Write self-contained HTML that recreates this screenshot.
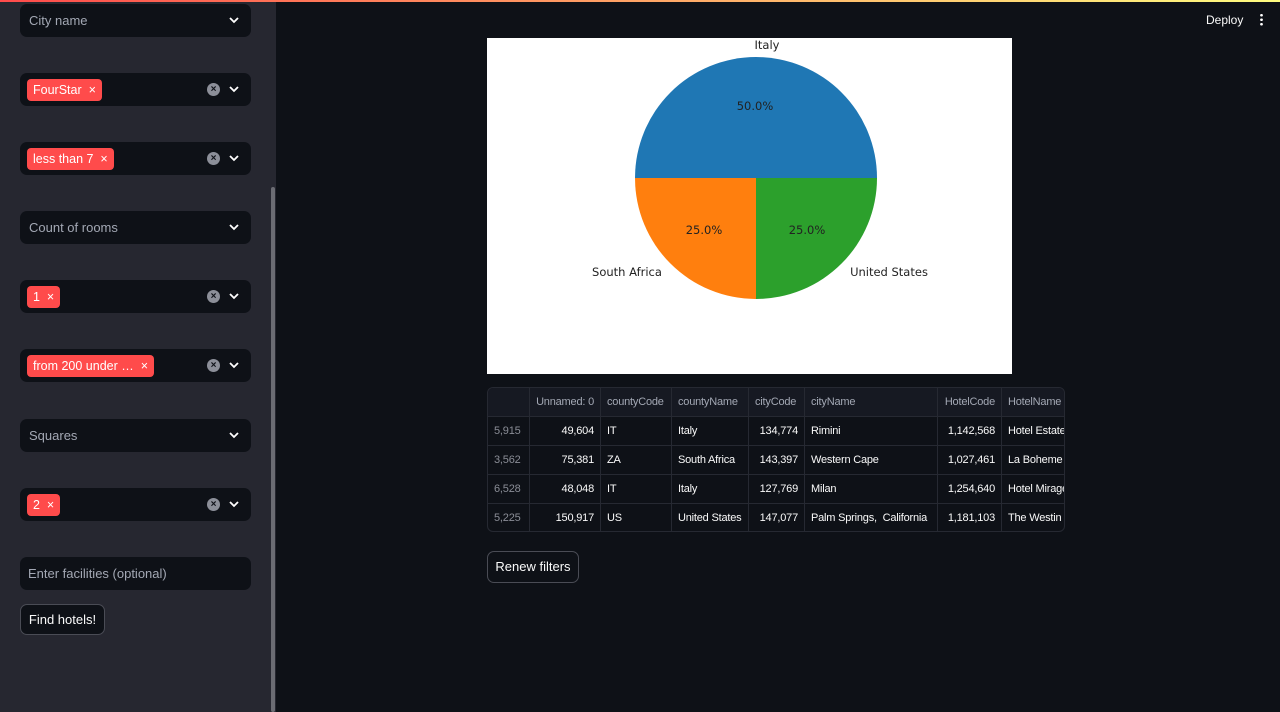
<!DOCTYPE html><html><head><style>
*{box-sizing:border-box;margin:0;padding:0}
html,body{width:1280px;height:712px;overflow:hidden}
body{background:#0e1117;font-family:"Liberation Sans",sans-serif;color:#fafafa;position:relative}
.top{position:absolute;left:0;top:0;width:1280px;height:2px;background:linear-gradient(90deg,#ff4b4b,#fffd80)}
.side{position:absolute;left:0;top:2px;width:276px;height:710px;background:#262730}
.sb{position:absolute;left:271px;top:185px;width:4px;height:525px;background:#6b6c73;border-radius:2px}
.sel{position:absolute;left:20px;width:231px;height:33px;background:#0e1117;border-radius:7px;font-size:13px}
.ph{position:absolute;left:9px;top:9px;color:#a3a8b4}
.chev{position:absolute;right:12px;top:13px}
.clr{position:absolute;right:31px;top:10px;width:13px;height:13px;border-radius:50%;background:#8c8f99;color:#0e1117;font-size:10px;line-height:13px;text-align:center;font-weight:bold}
.tag{position:absolute;left:7px;top:6px;height:22px;background:#ff4b4b;border-radius:4px;color:#fff;font-size:12.5px;line-height:22px;padding:0 6px}
.btn{position:absolute;border:1px solid #4a4c55;border-radius:7px;background:#0e1117;font-size:13px;text-align:center}
.tw{position:absolute;left:487px;top:387px;width:578px;height:145px;overflow:hidden;border:1px solid #262932;border-radius:6px}
table{border-collapse:collapse;font-size:11px;table-layout:fixed;width:640px;margin:-1px 0 0 -1px}
td{border:1px solid #262932;height:29px;padding:0 6px;white-space:nowrap;overflow:hidden;color:#fafafa;letter-spacing:-0.2px}
tr:first-child td{color:#a3a8b4;background:#161922}
.r{text-align:right}.g{color:#8a8d96}
</style></head><body>
<div class="top"></div>
<div class="side"><div class="sb"></div></div>
<svg width="0" height="0" style="position:absolute"><defs><path id="cv" d="M1 1l4 4 4-4" stroke="#fff" stroke-width="1.8" fill="none"/></defs></svg>
<div class="sel" style="top:4px"><span class="ph">City name</span><svg class="chev" width="10" height="7"><use href="#cv"/></svg></div>
<div class="sel" style="top:73px"><span class="tag">FourStar &nbsp;×</span><span class="clr">×</span><svg class="chev" width="10" height="7"><use href="#cv"/></svg></div>
<div class="sel" style="top:142px"><span class="tag">less than 7 &nbsp;×</span><span class="clr">×</span><svg class="chev" width="10" height="7"><use href="#cv"/></svg></div>
<div class="sel" style="top:211px"><span class="ph">Count of rooms</span><svg class="chev" width="10" height="7"><use href="#cv"/></svg></div>
<div class="sel" style="top:280px"><span class="tag">1 &nbsp;×</span><span class="clr">×</span><svg class="chev" width="10" height="7"><use href="#cv"/></svg></div>
<div class="sel" style="top:349px"><span class="tag">from 200 under … &nbsp;×</span><span class="clr">×</span><svg class="chev" width="10" height="7"><use href="#cv"/></svg></div>
<div class="sel" style="top:419px"><span class="ph">Squares</span><svg class="chev" width="10" height="7"><use href="#cv"/></svg></div>
<div class="sel" style="top:488px"><span class="tag">2 &nbsp;×</span><span class="clr">×</span><svg class="chev" width="10" height="7"><use href="#cv"/></svg></div>
<div class="sel" style="top:557px"><span class="ph" style="left:8px">Enter facilities (optional)</span></div>
<div class="btn" style="left:20px;top:604px;width:85px;height:31px;line-height:29px">Find hotels!</div>
<div style="position:absolute;left:1206px;top:13px;font-size:12px">Deploy</div>
<div style="position:absolute;left:1260px;top:13px;width:3px;height:13px;background:radial-gradient(circle,#fff 1.2px,transparent 1.5px) 0 0/3px 4.5px"></div>
<svg style="position:absolute;left:487px;top:38px" width="525" height="336">
<rect width="525" height="336" fill="#fff"/>
<path d="M148 140 A121 121 0 0 1 390 140 Z" fill="#1f77b4"/>
<path d="M269 140 L148 140 A121 121 0 0 0 269 261 Z" fill="#ff7f0e"/>
<path d="M269 140 L269 261 A121 121 0 0 0 390 140 Z" fill="#2ca02c"/>
<g font-family="DejaVu Sans,sans-serif" font-size="11.5" fill="#222" text-anchor="middle">
<text x="280" y="11">Italy</text><text x="268" y="72">50.0%</text>
<text x="217" y="196">25.0%</text><text x="320" y="196">25.0%</text>
<text x="140" y="238">South Africa</text><text x="402" y="238">United States</text></g>
</svg>
<div class="tw"><table>
<colgroup><col style="width:42px"><col style="width:71px"><col style="width:71px"><col style="width:77px"><col style="width:56px"><col style="width:133px"><col style="width:64px"><col style="width:126px"></colgroup>
<tr><td></td><td class="r">Unnamed: 0</td><td>countyCode</td><td>countyName</td><td>cityCode</td><td>cityName</td><td class="r">HotelCode</td><td>HotelName</td></tr>
<tr><td class="g">5,915</td><td class="r">49,604</td><td>IT</td><td>Italy</td><td class="r">134,774</td><td>Rimini</td><td class="r">1,142,568</td><td>Hotel Estate</td></tr>
<tr><td class="g">3,562</td><td class="r">75,381</td><td>ZA</td><td>South Africa</td><td class="r">143,397</td><td>Western Cape</td><td class="r">1,027,461</td><td>La Boheme</td></tr>
<tr><td class="g">6,528</td><td class="r">48,048</td><td>IT</td><td>Italy</td><td class="r">127,769</td><td>Milan</td><td class="r">1,254,640</td><td>Hotel Mirage</td></tr>
<tr><td class="g">5,225</td><td class="r">150,917</td><td>US</td><td>United States</td><td class="r">147,077</td><td>Palm Springs,&nbsp; California</td><td class="r">1,181,103</td><td>The Westin Mission</td></tr>
</table></div>
<div class="btn" style="left:487px;top:551px;width:92px;height:32px;line-height:30px">Renew filters</div>
</body></html>
